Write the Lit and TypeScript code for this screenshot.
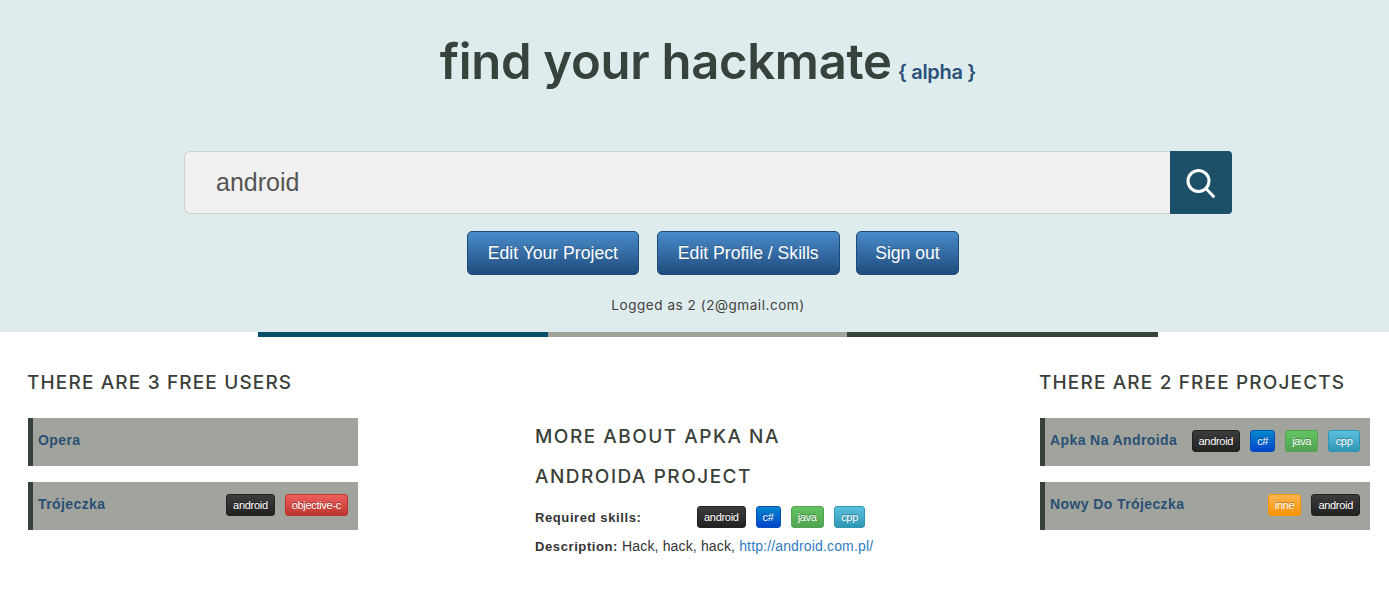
import { LitElement, html, css } from "lit";
import { customElement } from "lit/decorators.js";

const tagKinds: Record<string, string> = {
  android: "black", "c#": "blue", java: "green", cpp: "cyan", "objective-c": "red", inne: "orange",
};

@customElement("app-root")
export class AppRoot extends LitElement {
  static styles = css`
    :host { display: block; font-family: "Liberation Sans", Arial, sans-serif; background: #fff; min-height: 596px; color: #333; }
    .hero { background: #deecee; height: 332px; display: flex; flex-direction: column; align-items: center; box-sizing: border-box; padding: 31px 0 0 27px; }
    .title { display: flex; align-items: baseline; height: 60px; margin: 0 0 60px; font-family: Inter, sans-serif; color: #38423c; }
    .title b { font-size: 49px; font-weight: 600; line-height: 62px; letter-spacing: -0.3px; }
    .title span { font-size: 20px; font-weight: 600; color: #2b5178; margin-left: 6px; letter-spacing: -0.3px; }
    .search { display: flex; width: 1048px; height: 63px; box-sizing: border-box; }
    .field { flex: 1; background: #f1f1f1; border: 1px solid #cfd0cf; border-right: 0; border-radius: 6px 0 0 6px; display: flex; align-items: center; padding-left: 31px; font-size: 25px; color: #555; }
    .go { width: 62px; background: #1c4f68; border-radius: 0 4px 4px 0; display: flex; align-items: center; justify-content: center; }
    .btns { display: flex; margin: 17px 0 0 10px; }
    .btn { height: 44px; box-sizing: border-box; border: 1px solid #1b4a75; border-radius: 5px; background: linear-gradient(#4a8ccb, #1f4c7d); color: #fff; font-size: 17.6px; display: flex; align-items: center; padding: 0 20px; text-shadow: 0 -1px 0 rgba(0,0,0,.2); margin-right: 18px; }
    .btn:nth-child(2) { margin-right: 16px; }
    .btn:last-child { margin-right: 0; padding: 0 18.5px; }
    .logged { margin-top: 21px; font-family: Inter, sans-serif; font-size: 13.5px; color: #45403c; line-height: 18px; letter-spacing: 0.55px; }
    .rule { display: flex; width: 900px; height: 5px; margin-left: 258px; }
    .rule i:nth-child(1) { width: 290px; background: #054f6d; }
    .rule i:nth-child(2) { width: 299px; background: #a0a398; }
    .rule i:nth-child(3) { width: 311px; background: #38423c; }
    .cols { display: grid; grid-template-columns: 330px 1fr 330px; padding: 0 19px 0 28px; }
    h2 { font-family: Inter, sans-serif; font-weight: 500; font-size: 19px; line-height: 40px; margin: 0; color: #3b3f3a; text-transform: uppercase; letter-spacing: 1.15px; }
    .side h2 { margin: 26px 0 15px -1px; white-space: nowrap; }
    .row { height: 48px; box-sizing: border-box; background: #a0a49c; border-left: 5px solid #38423c; display: flex; align-items: center; justify-content: space-between; padding: 0 10px 5px 5px; margin-bottom: 16px; }
    .name { font-size: 14px; font-weight: 700; color: #2b4f75; letter-spacing: 0.4px; }
    .tags { display: flex; gap: 10px; }
    .row .tags { margin-top: 3px; }
    .tag { height: 22px; box-sizing: border-box; border-radius: 3px; border: 1px solid; color: #fff; font-size: 11px; letter-spacing: -0.3px; display: flex; align-items: center; padding: 0 6px; text-shadow: 0 -1px 0 rgba(0,0,0,.35); }
    .black { background: linear-gradient(#3c3c3c, #222); border-color: #222; }
    .blue { background: linear-gradient(#0088cc, #0044cc); border-color: #0750b8; }
    .green { background: linear-gradient(#62c462, #51a351); border-color: #51a351; }
    .cyan { background: linear-gradient(#5bc0de, #2f96b4); border-color: #2f96b4; padding: 0 6.5px; }
    .red { background: linear-gradient(#ee5f5b, #bd362f); border-color: #bd362f; }
    .orange { background: linear-gradient(#fbb450, #f89406); border-color: #f89406; }
    .center { padding: 80px 0 0 177px; }
    .center h2 { width: 300px; letter-spacing: 1.5px; }
    .skills { display: flex; align-items: center; margin-top: 9px; color: #333; }
    .skills b, .desc b { font-size: 13px; letter-spacing: 0.6px; color: #333; }
    .skills b { width: 162px; }
    .desc { font-size: 14px; line-height: 20px; margin-top: 8px; letter-spacing: 0.15px; }
    a { color: #2d7cc0; text-decoration: none; letter-spacing: 0.15px; }
  `;

  tags(list: string[]) {
    return html`<div class="tags">${list.map((t) => html`<span class="tag ${tagKinds[t]}">${t}</span>`)}</div>`;
  }
  row(name: string, list: string[]) {
    return html`<div class="row"><span class="name">${name}</span>${list.length ? this.tags(list) : ""}</div>`;
  }

  render() {
    return html`
      <section class="hero">
        <h1 class="title"><b>find your hackmate</b><span>{ alpha }</span></h1>
        <div class="search">
          <div class="field">android</div>
          <div class="go">
            <svg width="30" height="32" viewBox="0 0 30 32" fill="none" stroke="#fff" stroke-width="3" stroke-linecap="round">
              <circle cx="12.5" cy="14" r="10.5"></circle><path d="M20.5 22l7 7.5"></path>
            </svg>
          </div>
        </div>
        <div class="btns">
          <div class="btn">Edit Your Project</div>
          <div class="btn">Edit Profile / Skills</div>
          <div class="btn">Sign out</div>
        </div>
        <div class="logged">Logged as 2 (2@gmail.com)</div>
      </section>
      <div class="rule"><i></i><i></i><i></i></div>
      <div class="cols">
        <div class="side">
          <h2>There are 3 free users</h2>
          ${this.row("Opera", [])}
          ${this.row("Trójeczka", ["android", "objective-c"])}
        </div>
        <div class="center">
          <h2>More about Apka Na Androida project</h2>
          <div class="skills"><b>Required skills:</b>${this.tags(["android", "c#", "java", "cpp"])}</div>
          <div class="desc"><b>Description:</b> Hack, hack, hack, <a>http://android.com.pl/</a></div>
        </div>
        <div class="side">
          <h2>There are 2 free projects</h2>
          ${this.row("Apka Na Androida", ["android", "c#", "java", "cpp"])}
          ${this.row("Nowy Do Trójeczka", ["inne", "android"])}
        </div>
      </div>
    `;
  }
}
